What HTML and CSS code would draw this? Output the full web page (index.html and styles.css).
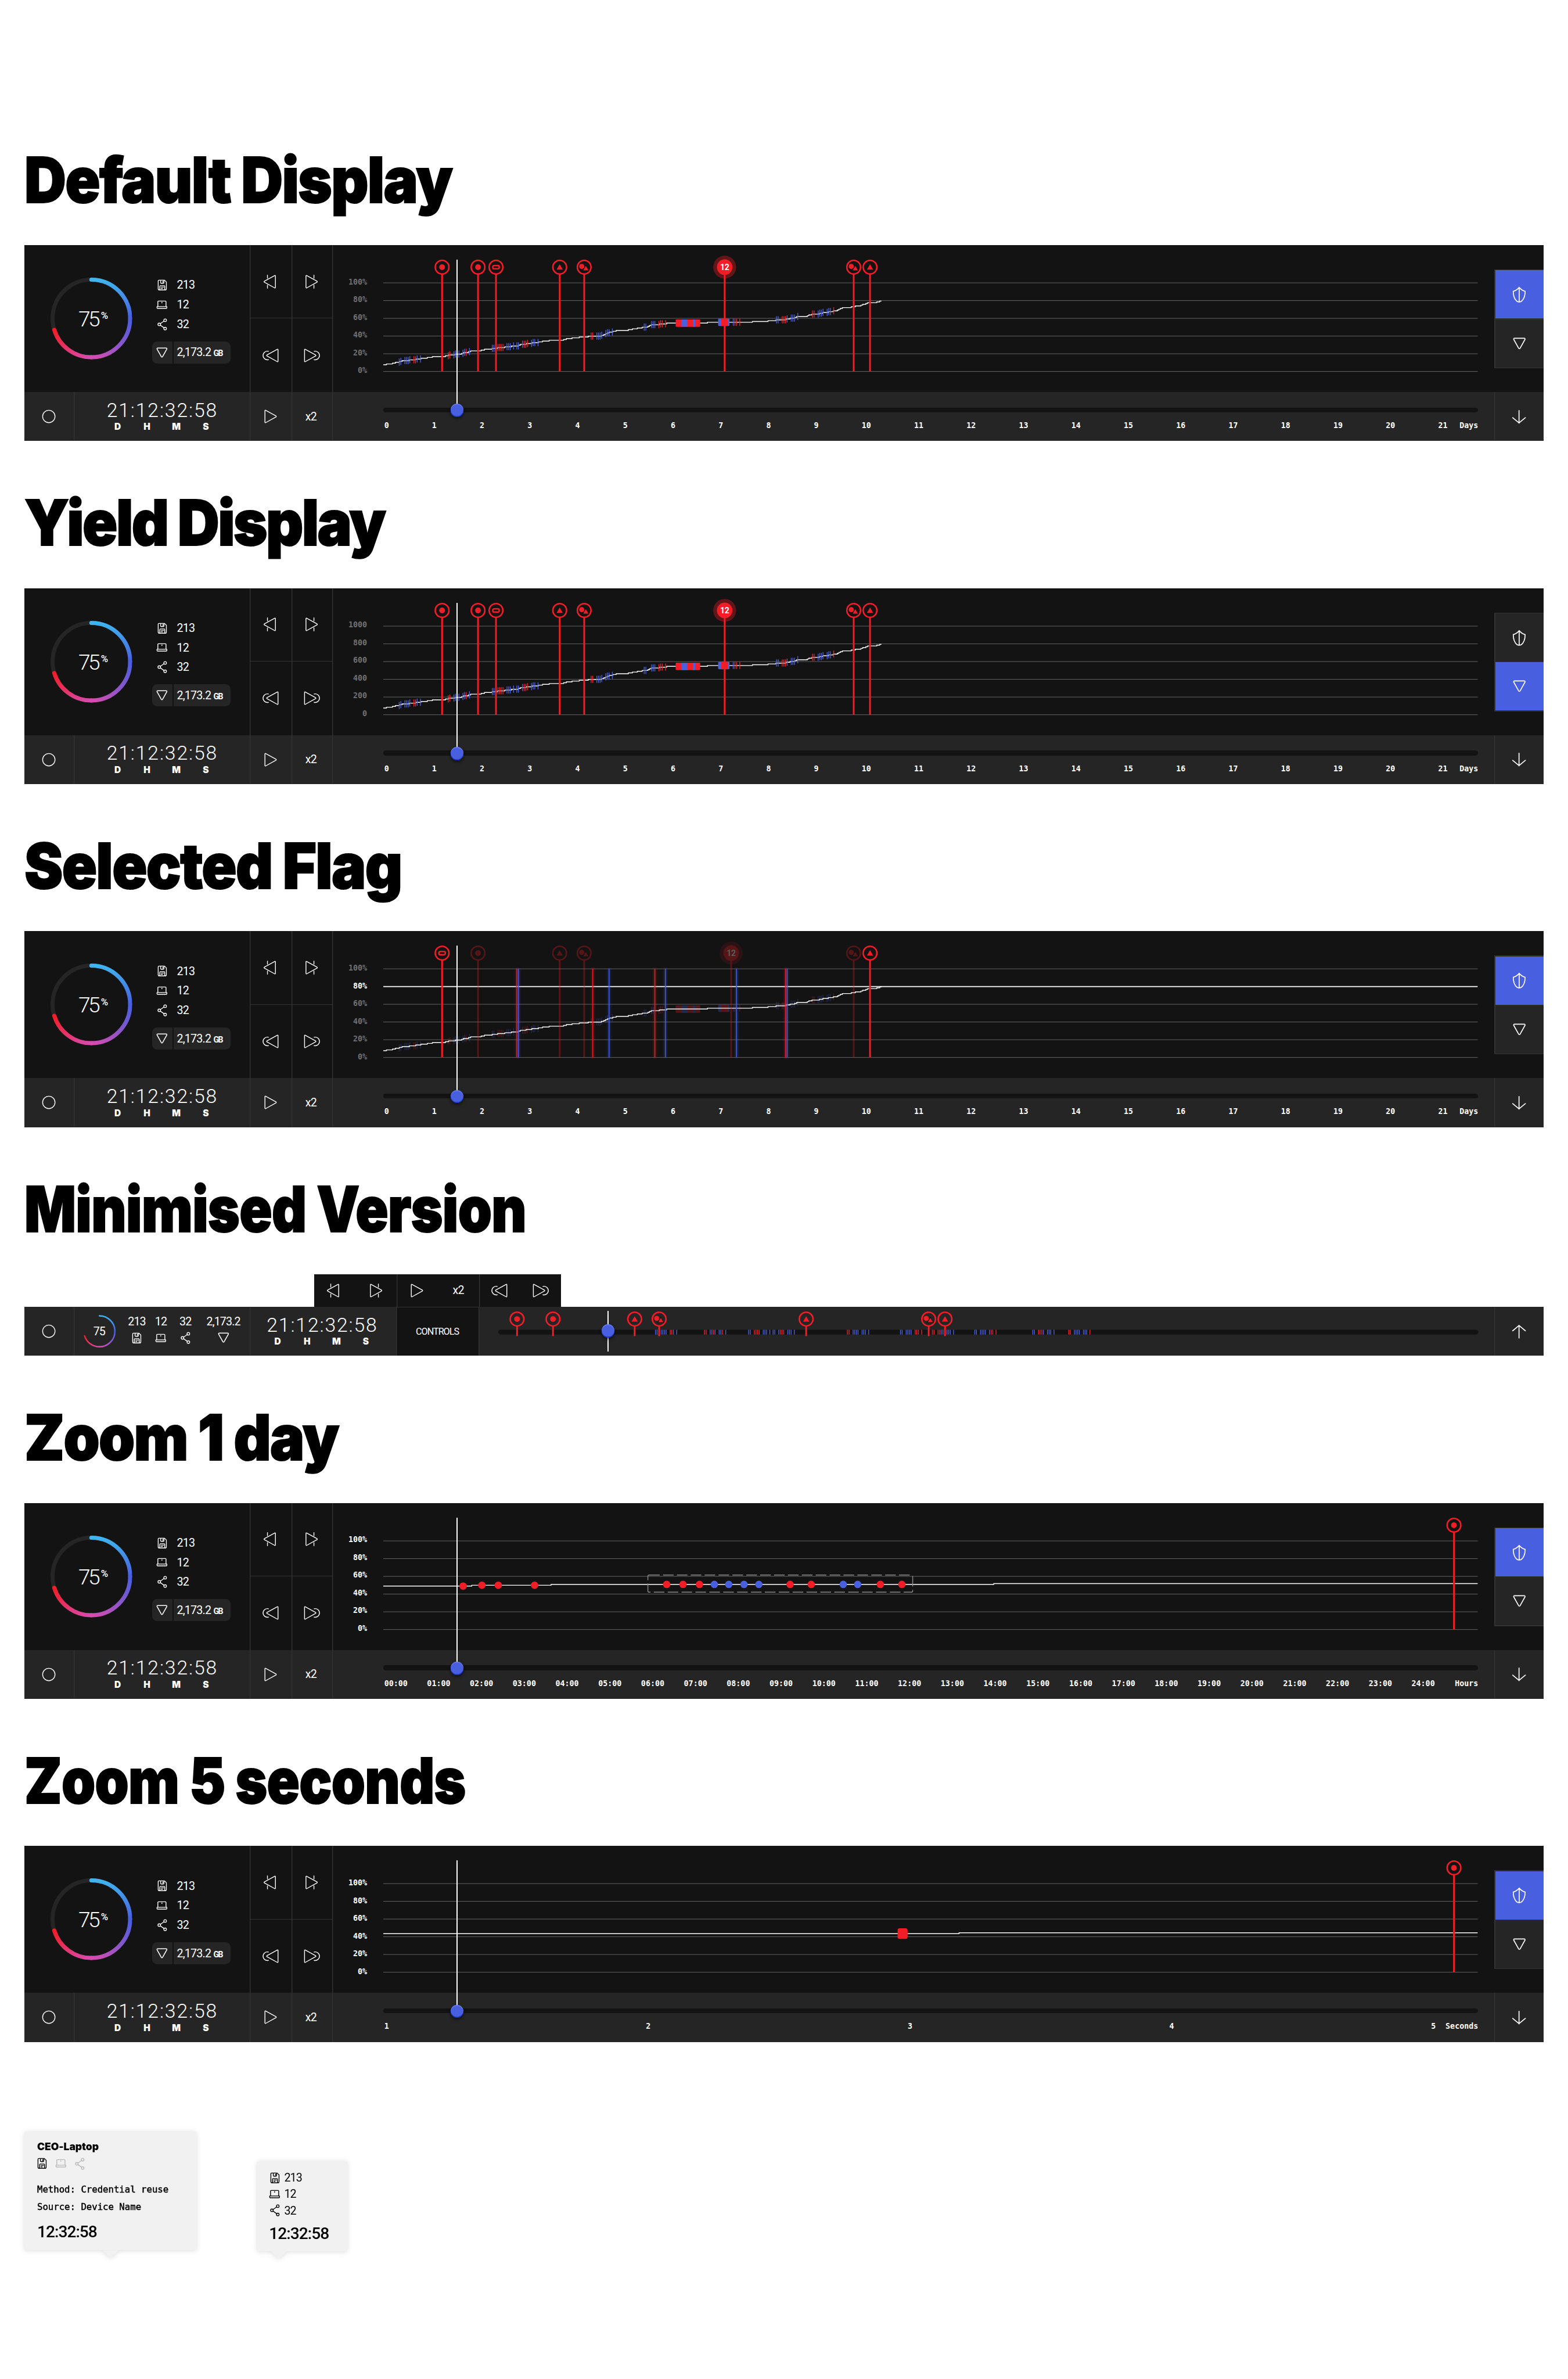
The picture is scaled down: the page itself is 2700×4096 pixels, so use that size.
FILE: index.html
```html
<!DOCTYPE html>
<html lang="en">
<head>
<meta charset="utf-8">
<title>Timeline states</title>
<link rel="stylesheet" href="styles.css">
</head>
<body>

<svg class="sprite" aria-hidden="true">
  <symbol id="i-record" viewBox="0 0 40 40"><circle cx="20" cy="20" r="15.2"/></symbol>
  <symbol id="i-play" viewBox="0 0 40 40"><path d="M6 5.8v28.4c0 1 .8 1.4 1.6 1L33 21.3c1-.6 1-2 0-2.6L7.600 4.800c-.8-.4-1.600 0-1.600 1z"/></symbol>
  <symbol id="i-prev" viewBox="0 0 40 40"><path d="M34.500 5.800v28.400c0 1-.8 1.400-1.600 1L7.500 21.300c-1-.6-1-2 0-2.600L32.900 4.800c.8-.4 1.600 0 1.600 1zM15 4v7.500M15 28.500V36"/></symbol>
  <symbol id="i-next" viewBox="0 0 40 40"><path d="M5.500 5.800v28.400c0 1 .8 1.400 1.600 1L32.500 21.300c1-.6 1-2 0-2.600L7.100 4.800c-.8-.4-1.600 0-1.600 1zM25 4v7.500M25 28.500V36"/></symbol>
  <symbol id="i-rewind" viewBox="0 0 40 40"><path d="M38 5.800v28.400c0 1-.8 1.400-1.600 1L11 21.300c-1-.6-1-2 0-2.600L36.400 4.800c.8-.4 1.600 0 1.600 1z"/><path d="M14.500 9.700A10.600 10.600 0 1 0 14.500 30.300"/></symbol>
  <symbol id="i-forward" viewBox="0 0 40 40"><path d="M2 5.800v28.400c0 1 .8 1.400 1.600 1L29 21.300c1-.6 1-2 0-2.600L3.600 4.800c-.8-.4-1.600 0-1.600 1z"/><path d="M25.500 9.700A10.600 10.600 0 1 1 25.500 30.300"/></symbol>
  <symbol id="i-disk" viewBox="0 0 24 28"><path d="M4 2h13.500L22 6.500V23a3 3 0 0 1-3 3H5a3 3 0 0 1-3-3V4a2 2 0 0 1 2-2zM8 2v6a1.500 1.500 0 0 0 1.500 1.500h5A1.500 1.500 0 0 0 16 8V2M13.500 4.500v2.500M6 26V17a1.500 1.500 0 0 1 1.500-1.500h9A1.500 1.500 0 0 1 18 17v9M9.500 19h6M9.500 22.500h3"/></symbol>
  <symbol id="i-laptop" viewBox="0 0 28 22"><path d="M4 15.500V3.500A1.500 1.500 0 0 1 5.500 2h17A1.500 1.500 0 0 1 24 3.500v12M2 15.500h24v3a1.500 1.500 0 0 1-1.500 1.500h-21A1.500 1.500 0 0 1 2 18.500zM14 4.500v2"/></symbol>
  <symbol id="i-share" viewBox="0 0 24 30"><circle cx="4.600" cy="15" r="3.200"/><circle cx="19" cy="4.800" r="3.200"/><circle cx="19" cy="25.200" r="3.200"/><path d="M7.200 13.100 16.300 6.700M7.200 16.900l9.100 6.400"/></symbol>
  <symbol id="i-yield" viewBox="0 0 32 30"><path d="M4 2h24a2 2 0 0 1 1.700 3L17.700 26.500a2 2 0 0 1-3.400 0L2.300 5A2 2 0 0 1 4 2z"/></symbol>
  <symbol id="i-shield" viewBox="0 0 34 40"><path d="M17 2.500c3.500 4.500 8.500 8 14.500 9.800C31.500 24 27 33 22 37c-3 1.500-7 1.500-10 0C7 33 2.500 24 2.500 12.300 8.500 10.500 13.500 7 17 2.500zM17 3v34.500"/></symbol>
  <symbol id="i-down" viewBox="0 0 36 36"><path d="M18 2.500v31M2.500 20 18 33 33.500 20"/></symbol>
  <symbol id="i-up" viewBox="0 0 36 36"><path d="M18 33.500v-31M2.500 16 18 3 33.500 16"/></symbol>

  <symbol id="f-dot" viewBox="-20 -20 40 40"><circle r="16.800"/><circle class="solid" r="7"/></symbol>
  <symbol id="f-slot" viewBox="-20 -20 40 40"><circle r="16.800"/><rect x="-7.800" y="-4" width="15.600" height="8" rx="3"/></symbol>
  <symbol id="f-tri" viewBox="-20 -20 40 40"><circle r="16.800"/><path class="solid" d="M0-7 7.200 5.200a.6.6 0 0 1-.6.9H-6.600a.6.6 0 0 1-.6-.9z"/></symbol>
  <symbol id="f-combo" viewBox="-20 -20 40 40"><circle r="16.800"/><circle class="solid" cx="-6" cy="-1.800" r="6.300"/><path class="solid cut" d="M4-4.500 11.600 8.600H-3.600z"/></symbol>

  <linearGradient id="g1" x1="0" y1="0" x2="0" y2="1"><stop stop-color="#3fb4f0"/><stop offset="1" stop-color="#485fe0"/></linearGradient>
  <linearGradient id="g2" x1="1" y1="0" x2="0" y2="1"><stop stop-color="#485fe0"/><stop offset="1" stop-color="#d84bb0"/></linearGradient>
  <linearGradient id="g3" x1="1" y1="1" x2="0" y2="0"><stop stop-color="#d84bb0"/><stop offset="1" stop-color="#f21d26"/></linearGradient>
  <symbol id="ring" viewBox="0 0 200 200">
    <circle class="ring-track" cx="100" cy="100" r="95"/>
    <path stroke="url(#g1)" d="M100 5A95 95 0 0 1 195 100"/>
    <path stroke="url(#g3)" d="M100 195A95 95 0 0 1 9.200 127.800"/>
    <path stroke="url(#g2)" d="M195 100A95 95 0 0 1 100 195"/>
  </symbol>
</svg>

<template id="panel">
  <div class="panel">
    <div class="info">
      <div class="gauge">
        <svg class="ring"><use href="#ring"/></svg>
        <div class="gauge-value">75<span class="pct">%</span></div>
      </div>
      <div class="stats">
        <div class="stat"><svg class="ico disk"><use href="#i-disk"/></svg><span>213</span></div>
        <div class="stat"><svg class="ico laptop"><use href="#i-laptop"/></svg><span>12</span></div>
        <div class="stat"><svg class="ico share"><use href="#i-share"/></svg><span>32</span></div>
        <div class="pill"><svg class="ico yield"><use href="#i-yield"/></svg><span>2,173.2 <b>GB</b></span></div>
      </div>
    </div>
    <div class="cell line-l line-b back"><svg class="ico step"><use href="#i-prev"/></svg></div>
    <div class="cell line-l line-b"><svg class="ico step"><use href="#i-next"/></svg></div>
    <div class="cell line-l"><svg class="ico step"><use href="#i-rewind"/></svg></div>
    <div class="cell line-l"><svg class="ico step"><use href="#i-forward"/></svg></div>
    <div class="graph line-l">
      <div class="levels"></div>
      <svg class="plot" viewBox="0 0 2680 360"></svg>
    </div>
    <div class="toggles">
      <div class="toggle"><svg class="ico shield"><use href="#i-shield"/></svg></div>
      <div class="toggle"><svg class="ico yield-lg"><use href="#i-yield"/></svg></div>
    </div>
    <div class="clock-cell bar">
      <div class="record"><svg class="ico step"><use href="#i-record"/></svg></div>
      <div class="clock line-l">
        <div class="time">21:12:32:58</div>
        <div class="units"><span>D</span><span>H</span><span>M</span><span>S</span></div>
      </div>
    </div>
    <div class="cell bar line-l"><svg class="ico step"><use href="#i-play"/></svg></div>
    <div class="cell bar line-l speed">x2</div>
    <div class="scrub bar line-l">
      <div class="track"></div>
      <div class="axis"><div class="ticks"></div><div class="unit"></div></div>
    </div>
    <div class="cell bar line-l"><svg class="ico arrow"><use href="#i-down"/></svg></div>
    <div class="playhead"><i class="knob"></i></div>
  </div>
</template>

<main>
  <section><h1>Default Display</h1><div data-panel="default"></div></section>
  <section><h1 class="snug">Yield Display</h1><div data-panel="yield"></div></section>
  <section><h1>Selected Flag</h1><div data-panel="selected"></div></section>

  <section>
    <h1 class="tight">Minimised Version</h1>
    <div class="popup">
      <div class="pair back"><svg class="ico step"><use href="#i-prev"/></svg><svg class="ico step"><use href="#i-next"/></svg></div>
      <div class="pair line-l"><svg class="ico step"><use href="#i-play"/></svg><span class="speed">x2</span></div>
      <div class="pair line-l"><svg class="ico step"><use href="#i-rewind"/></svg><svg class="ico step"><use href="#i-forward"/></svg></div>
    </div>
    <div class="mini">
      <div class="record"><svg class="ico step"><use href="#i-record"/></svg></div>
      <div class="mini-stats line-l">
        <div class="mini-gauge"><svg class="ring"><use href="#ring"/></svg><span>75</span></div>
        <div class="mini-stat w1"><span>213</span><svg class="ico disk"><use href="#i-disk"/></svg></div>
        <div class="mini-stat w2"><span>12</span><svg class="ico laptop"><use href="#i-laptop"/></svg></div>
        <div class="mini-stat w3"><span>32</span><svg class="ico share"><use href="#i-share"/></svg></div>
        <div class="mini-stat w4"><span>2,173.2</span><svg class="ico yield"><use href="#i-yield"/></svg></div>
      </div>
      <div class="clock line-l">
        <div class="time">21:12:32:58</div>
        <div class="units"><span>D</span><span>H</span><span>M</span><span>S</span></div>
      </div>
      <div class="controls line-l">CONTROLS</div>
      <div class="mini-scrub line-l"><svg class="mini-plot" viewBox="0 0 2400 120"></svg></div>
      <div class="cell line-l"><svg class="ico arrow"><use href="#i-up"/></svg></div>
      <div class="playhead"><i class="knob"></i></div>
    </div>
  </section>

  <section><h1>Zoom 1 day</h1><div data-panel="day"></div></section>
  <section><h1 class="tight">Zoom 5 seconds</h1><div data-panel="seconds"></div></section>

  <div class="tips">
    <div class="tip tip-device">
      <h2>CEO-Laptop</h2>
      <div class="tip-icons">
        <svg class="ico disk"><use href="#i-disk"/></svg>
        <svg class="ico laptop off"><use href="#i-laptop"/></svg>
        <svg class="ico share off"><use href="#i-share"/></svg>
      </div>
      <p>Method: Credential reuse</p>
      <p>Source: Device Name</p>
      <div class="tip-time">12:32:58</div>
    </div>
    <div class="tip tip-totals">
      <div class="tip-row"><svg class="ico disk"><use href="#i-disk"/></svg><span>213</span></div>
      <div class="tip-row"><svg class="ico laptop"><use href="#i-laptop"/></svg><span>12</span></div>
      <div class="tip-row"><svg class="ico share"><use href="#i-share"/></svg><span>32</span></div>
      <div class="tip-time">12:32:58</div>
    </div>
  </div>
</main>

<script src="script.js"></script>
</body>
</html>
```
FILE: styles.css
```css
/* 1rem = 10 design pixels */
html { font-size: 7.03125px; }
* { box-sizing: border-box; margin: 0; }

:root {
  --ink: #131313;
  --bar: #252525;
  --line: #333333;
  --red: #f21d26;
  --blue: #485fe0;
}

body {
  width: 384rem;
  height: 582.6rem;
  background: #fff;
  color: #fff;
  font-family: Roboto, sans-serif;
  overflow: hidden;
}

main { padding: 36rem 6rem 0; }
section { margin-bottom: 12rem; }

h1 {
  height: 24rem;
  padding-top: 0.1rem;
  color: #000;
  font: 900 15.4rem/15.8rem Inter, sans-serif;
  letter-spacing: -0.017em;
  white-space: nowrap;
  transform: scaleX(0.92);
  transform-origin: 0 0;
  -webkit-text-stroke: 0.3rem #000;
}
h1.snug { letter-spacing: -0.026em; }
h1.tight { letter-spacing: -0.007em; transform: scaleX(0.86); }

.sprite { position: absolute; width: 0; height: 0; }

/* icons */
.ico {
  display: block;
  flex: none;
  fill: none;
  stroke: currentColor;
  stroke-width: 2;
  stroke-linecap: round;
  stroke-linejoin: round;
  overflow: visible;
}
.step { width: 4rem; height: 4rem; }
.disk { width: 2.4rem; height: 2.8rem; }
.laptop { width: 2.8rem; height: 2.2rem; }
.share { width: 2.4rem; height: 3rem; }
.yield { width: 2.8rem; height: 2.6rem; stroke-width: 2.6; }
.yield-lg { width: 3.2rem; height: 3rem; stroke-width: 2.4; }
.shield { width: 3.4rem; height: 4rem; stroke-width: 2.4; }
.arrow { width: 3.6rem; height: 3.6rem; stroke-width: 2.4; }

/* full panel */
.panel {
  position: relative;
  display: grid;
  grid-template-columns: 55.2rem 10.2rem 10rem 1fr 12rem;
  grid-template-rows: 18rem 18rem 12rem;
  height: 48rem;
  background: var(--ink);
}
.line-l { box-shadow: inset 0.2rem 0 0 var(--line); }
.line-b { border-bottom: 0.2rem solid var(--line); }
.bar { background: var(--bar); }
.cell { display: flex; align-items: center; justify-content: center; }
.cell.back { padding-right: 0.5rem; }
.speed { font-size: 2.8rem; font-weight: 450; letter-spacing: -0.04em; }
.cell.speed { padding-right: 0.5rem; }

.info {
  grid-column: 1;
  grid-row: 1 / 3;
  display: flex;
  padding: 7.4rem 0 0 6.4rem;
}
.gauge { position: relative; width: 20rem; height: 20rem; margin-top: 0.6rem; }
.ring { display: block; width: 100%; height: 100%; fill: none; stroke-width: 10; stroke-linecap: round; overflow: visible; }
.ring-track { stroke: var(--bar); }
.gauge-value {
  position: absolute;
  left: 6.8rem;
  top: 6.8rem;
  font-size: 5.3rem;
  line-height: 6.6rem;
  font-weight: 300;
  letter-spacing: -0.1em;
  white-space: nowrap;
}
.pct { font-size: 2.4rem; font-weight: 500; margin-left: 0.7rem; vertical-align: 1.8rem; line-height: 1; }

.stats { margin-left: 4.8rem; }
.stat, .pill { display: grid; grid-template-columns: 5rem 1fr; align-items: center; }
.stat .ico, .pill .ico { justify-self: center; }
.stat { height: 4.8rem; }
.stat span, .pill span { padding-left: 1.1rem; font-size: 2.8rem; font-weight: 450; letter-spacing: -0.04em; white-space: nowrap; }
.pill {
  width: 19.2rem;
  height: 5.4rem;
  margin-top: 1.8rem;
  border-radius: 1.2rem;
  background: linear-gradient(90deg, var(--bar) 5rem, var(--ink) 5rem, var(--ink) 5.2rem, var(--bar) 5.2rem);
}
.pill b { font-size: 2rem; font-weight: 700; letter-spacing: -0.1em; }

.panel > .cell.line-l:nth-child(2) { grid-area: 1 / 2; }
.panel > .cell.line-l:nth-child(3) { grid-area: 1 / 3; }
.panel > .cell.line-l:nth-child(4) { grid-area: 2 / 2; }
.panel > .cell.line-l:nth-child(5) { grid-area: 2 / 3; }

.graph { grid-area: 1 / 4 / 3 / 5; display: flex; gap: 3.96rem; }
.levels {
  width: 8.5rem;
  margin-right: -0.06rem;
  padding-top: 6.95rem;
  color: #707070;
  font: 700 1.9rem/4.34rem "DejaVu Sans Mono", monospace;
  text-align: right;
}
.levels .lit { color: #fff; }
.plot { display: block; width: 268rem; height: 36rem; overflow: visible; }

.toggles {
  grid-area: 1 / 5 / 3 / 6;
  align-self: start;
  display: flex;
  flex-direction: column;
  gap: 0.2rem;
  margin-top: 6rem;
  padding: 0.2rem 0 0.2rem 0.2rem;
  background: var(--line);
}
.toggle { display: flex; align-items: center; justify-content: center; height: 11.8rem; background: var(--bar); }
.toggle.on { background: var(--blue); }

.clock-cell { display: flex; grid-row: 3; }
.record { display: flex; align-items: center; justify-content: center; width: 12rem; flex: none; }
.clock { flex: 1; display: flex; flex-direction: column; align-items: center; padding-top: 1.8rem; }
.time {
  font-size: 4.8rem;
  line-height: 5.4rem;
  font-weight: 300;
  letter-spacing: 0.055em;
  margin-right: -0.055em;
  white-space: nowrap;
}
.units { display: flex; margin-top: 0.1rem; font: 900 2.2rem/2.6rem Inter, sans-serif; }
.units span { width: 7.2rem; text-align: center; }

.scrub { padding: 3.8rem 4rem 0 12.4rem; }
.track { height: 1.2rem; border-radius: 0.6rem; background: var(--ink); }
.axis {
  display: flex;
  margin-top: 2.1rem;
  padding-left: 0.3rem;
  font: 700 1.9rem/2.4rem "DejaVu Sans Mono", monospace;
}
.ticks { flex: 1; display: flex; justify-content: space-between; }
.unit { margin-left: 2.9rem; }

.playhead {
  position: absolute;
  left: 105.8rem;
  top: 3.6rem;
  width: 0.2rem;
  height: 37rem;
  background: #fff;
}
.knob {
  position: absolute;
  left: -1.5rem;
  bottom: -1.5rem;
  width: 3.2rem;
  height: 3.2rem;
  border-radius: 50%;
  background: var(--blue);
  box-shadow: inset 0 0.2rem 0.1rem #6d80ec, inset 0 -0.2rem 0.1rem #1530c0, 0 0.4rem 0.8rem rgba(0, 0, 0, 0.6);
}

/* plot marks */
.grid-line { stroke: #6c6c6c; stroke-width: 1.3; }
.grid-line.lit { stroke: #fff; stroke-width: 2.4; }
.curve { fill: none; stroke: #fff; stroke-width: 2; }
.r { fill: var(--red); }
.b { fill: var(--blue); }
.dim { opacity: 0.3; }
.flag { color: var(--red); fill: none; stroke: var(--red); stroke-width: 3.6; }
.flag .stem { stroke-width: 4.2; stroke-linecap: round; }
.flag .halo { stroke: none; fill: var(--red); fill-opacity: 0.36; }
.flag .core { stroke: none; fill: var(--red); }
.flag text { stroke: none; fill: #fff; font: 700 20px Roboto, sans-serif; text-anchor: middle; letter-spacing: -0.5px; }
.solid { fill: var(--red); stroke: none; }
.cut { stroke: var(--ink); stroke-width: 1.6; }
.beam { filter: drop-shadow(0 0 3px currentColor); }
.beam.r { color: var(--red); }
.beam.b { color: var(--blue); }
.marquee { fill: none; stroke: #8c8c8c; stroke-width: 2; stroke-dasharray: 26 8; }

/* minimised bar */
.popup {
  display: flex;
  width: 60.4rem;
  height: 8rem;
  margin-left: 71rem;
  background: var(--ink);
}
.pair { display: flex; align-items: center; justify-content: space-around; width: 20.2rem; }
.pair.back .step:first-child { margin: 0 0.5rem 0 -0.5rem; }
.pair .speed { width: 4rem; text-align: center; }
.mini {
  position: relative;
  display: grid;
  grid-template-columns: 12rem 43.2rem 35.8rem 20.2rem 1fr 12rem;
  height: 12rem;
  background: var(--bar);
}
.mini-stats { display: flex; align-items: center; padding-left: 2.3rem; }
.mini-gauge { position: relative; width: 8rem; height: 8rem; display: flex; align-items: center; justify-content: center; }
.mini-gauge .ring { position: absolute; inset: 0; stroke-width: 9; }
.mini-gauge span { font-size: 2.8rem; font-weight: 450; letter-spacing: -0.05em; }
.mini-stat {
  display: flex;
  flex-direction: column;
  align-items: center;
  height: 7.6rem;
  font-size: 2.8rem;
  line-height: 3.2rem;
  font-weight: 450;
  letter-spacing: -0.045em;
}
.mini-stat .ico { margin: auto; }
.w1 { width: 6rem; margin-left: 2.2rem; }
.w2 { width: 5.8rem; }
.w3 { width: 6.2rem; }
.w4 { width: 12.4rem; }
.mini .clock { padding-right: 0.6rem; }
.controls {
  display: flex;
  align-items: center;
  justify-content: center;
  background: var(--ink);
  border-top: 0.2rem solid var(--line);
  font-size: 2.3rem;
  letter-spacing: -0.06em;
}
.mini-scrub { padding-left: 4.8rem; }
.mini-plot { display: block; width: 240rem; height: 12rem; overflow: visible; }
.mini .playhead { left: 142.8rem; top: 1rem; height: 10rem; }
.mini .knob { bottom: 3.5rem; }
.rail { fill: var(--ink); }

/* tooltips */
.tips { display: flex; align-items: flex-start; gap: 15rem; margin-top: 22rem; color: #000; }
.tip {
  position: relative;
  border-radius: 0.4rem;
  background: #f1f1f1;
  filter: drop-shadow(0 0.2rem 0.6rem rgba(0, 0, 0, 0.14));
}
.tip::after {
  content: "";
  position: absolute;
  top: 100%;
  width: 4rem;
  height: 1.9rem;
  background: inherit;
  clip-path: polygon(0 0, 100% 0, 50% 100%);
}
.tip-device { width: 42rem; height: 29rem; padding: 2.1rem 3.1rem; }
.tip-device::after { left: 19.1rem; }
.tip h2 { font: 900 2.5rem/3.2rem Inter, sans-serif; letter-spacing: -0.004em; }
.tip-icons { display: flex; align-items: center; gap: 2rem; height: 3rem; margin: 1rem 0 2.8rem; }
.tip-icons .off { color: #b9b9b9; }
.tip p { font: 400 2.23rem/4.2rem "DejaVu Sans Mono", monospace; -webkit-text-stroke: 0.07rem #000; }
.tip-time { font-size: 4rem; line-height: 4.8rem; letter-spacing: -0.035em; font-weight: 500; }
.tip-device .tip-time { margin-top: 1.7rem; }
.tip-totals { width: 22rem; height: 22rem; margin: 7.2rem 0 0; padding: 2.1rem 2.9rem; }
.tip-totals::after { left: 3.3rem; }
.tip-row { display: grid; grid-template-columns: 2.8rem 1fr; column-gap: 0.9rem; align-items: center; height: 4rem; }
.tip-row .ico { justify-self: center; }
.tip-row span { font-size: 2.8rem; letter-spacing: -0.045em; font-weight: 450; }
.tip-totals .tip-time { margin-top: 1.3rem; }
```
FILE: script.js
```js
// Event groups: start x, then one mark per offset ("." leaves a slot empty)
const OFFSETS = [0, 4, 14, 18, 22, 26, 36, 40, 44, 52];
const GROUPS = [
  [39, "BBBBBBRRBB"], [159, "RRBBRBBBRB"], [267, "BBRRRRBBBB"], [327, "BBBRRRBBBB"],
  [509, "RRBBBBBBBB"], [639, "BB.BBBRRRR"], [821, "......BRRR"], [963, "BBRRRBBBBB"],
  [1051, "RRBBBBBBBR"]
];
const MINI_GROUPS = [
  [385, "BBBBBBRRBB"], [505, "RRBBRBBBRB"], [613, "BBRRRRBBBB"], [673, "BBBRRRBBBB"],
  [855, "RRBBBBBBBB"], [985, "BBBBBBRRRR"], [1063, "RRRRBBBBBB"],
  [1167, "BBBBBBBRRR"], [1309, "BBRRRBBBBB"], [1397, "RRBBBBBBBR"]
];
// x positions at which the cumulative curve climbs by one step of 2
const CLIMBS = [7.8, 22.6, 29.8, 39.4, 46, 63.8, 79.5, 92, 107.8, 120.2, 152.2, 159.9, 176.6, 192, 196.3,
  208.7, 214, 239.8, 247.9, 266.6, 280, 297.7, 313.9, 331.1, 335.9, 349.8, 363.7, 379.9, 390, 406.2, 441.6,
  448.3, 462.2, 479.9, 501.9, 534.4, 540.2, 544.5, 548.8, 553.6, 562.2, 570.3, 600.1, 610.2, 622.2, 634.1,
  648, 651.8, 656.1, 676.2, 693.9, 793.9, 903.9, 942.2, 961.8, 986.2, 996.2, 1007.7, 1012.5, 1038.3, 1042.1,
  1049.8, 1068, 1076.6, 1090, 1101.9, 1112, 1115.8, 1119.6, 1124.4, 1146, 1156, 1169.8, 1174.1, 1181.8,
  1186.1, 1208.6, 1215.8];

const level = x => 293 - 2 * CLIMBS.filter(c => c <= x).length;
const steps = (start, climbs, end) =>
  climbs.reduce((d, x, i) => d + `H${x}V${start - 2 * (i + 1)}`, `M0 ${start}`) + `H${end}`;
const marks = groups => groups.flatMap(([x0, s]) =>
  [...s].map((c, i) => [x0 + OFFSETS[i], c.toLowerCase()]).filter(m => m[1] !== "."));
const rect = (c, x, y, w, h, rx = 0) => `<rect class="${c}" x="${x}" y="${y}" width="${w}" height="${h}" rx="${rx}"/>`;
const flag = (x, type, dim = "", y = 54, foot = 308) => `<g class="flag ${dim}">` + (type === "count"
  ? `<circle class="halo" cx="${x}" cy="${y}" r="28"/><circle class="core" cx="${x}" cy="${y}" r="19"/><path class="stem" d="M${x} ${y + 18}V${foot}"/><text x="${x}" y="${y + 7}">12</text>`
  : `<use href="#f-${type}" x="${x - 20}" y="${y - 20}" width="40" height="40"/><path class="stem" d="M${x} ${y + 19}V${foot}"/>`) + "</g>";
const gridLines = lit => [0, 1, 2, 3, 4, 5].map(i =>
  `<path class="grid-line ${i === lit ? "lit" : ""}" d="M0 ${92.5 + 43.4 * i}H2680"/>`).join("");
const blocks = [["r", 716, 182, 60, 2], ["b", 730, 182, 15], ["b", 758, 182, 6],
  ["b", 820, 180, 28, 2], ["r", 827.5, 180, 16]].map(([c, x, y, w, r]) => rect(c, x, y, w, 18, r)).join("");
const eventMarks = skip => marks(GROUPS).filter(m => !skip.includes(m[0]))
  .map(([x, c]) => rect(c, x - 1, level(x) - 9, 2, 17.5)).join("");
const curve = `<path class="curve" d="${steps(293, CLIMBS, 1220)}"/>`;
const FLAGS = [[144, "dot"], [232, "dot"], [276, "slot"], [432, "tri"], [492, "combo"], [836, "count"], [1152, "combo"], [1192, "tri"]];
const BEAMS = [["r", 327], ["b", 331], ["r", 513], ["b", 553], ["r", 665], ["b", 691], ["b", 865], ["r", 985], ["b", 989]];
const dots = (list, y) => list.map(([c, x]) => `<circle class="${c}" cx="${x}" cy="${y}" r="9"/>`).join("");

const percent = ["100%", "80%", "60%", "40%", "20%", "0%"];
const days = [...Array(22).keys()];
const overview = gridLines() + curve + eventMarks([]) + blocks + FLAGS.map(f => flag(...f)).join("");

const PANELS = {
  default: { levels: percent, ticks: days, unit: "Days", plot: overview },
  yield: { levels: [1000, 800, 600, 400, 200, 0], ticks: days, unit: "Days", plot: overview, toggle: 1 },
  selected: {
    levels: percent, lit: [1], ticks: days, unit: "Days",
    plot: `<g class="dim">${eventMarks(BEAMS.map(b => b[1]))}${blocks}</g>` + gridLines(1) + curve
      + BEAMS.map(([c, x]) => rect("beam " + c, x - 1, 92, 2, 218)).join("")
      + [[144, "slot"], [232, "dot", "dim"], [432, "tri", "dim"], [492, "combo", "dim"], [852, "count", "dim"],
        [1152, "combo", "dim"], [1192, "tri"]].map(f => flag(...f)).join("")
  },
  day: {
    levels: percent, lit: [0, 1, 2, 3, 4, 5], unit: "Hours", gap: 4.9,
    ticks: [...Array(25).keys()].map(h => String(h).padStart(2, "0") + ":00"),
    plot: gridLines() + `<path class="curve" d="${steps(203, [216.6, 410.8, 1495], 2680)}"/>`
      + dots([["r", 195.5]], 203) + dots([["r", 241.5], ["r", 281.5], ["r", 370.5]], 201)
      + dots([["r", 694], ["r", 734], ["r", 774.3], ["b", 810.7], ["b", 846], ["b", 883.4], ["b", 919.7], ["r", 996.2],
        ["r", 1048], ["b", 1126.4], ["b", 1161.8], ["r", 1217.2], ["r", 1270]], 199)
      + `<rect class="marquee" x="648" y="176" width="648.5" height="42" rx="3"/>` + flag(2622, "dot")
  },
  seconds: {
    levels: percent, lit: [0, 1, 2, 3, 4, 5], unit: "Seconds", gap: 2.4, ticks: [1, 2, 3, 4, 5],
    plot: gridLines() + `<path class="curve" d="${steps(215, [1410], 2680)}"/>` + rect("r", 1259.5, 202, 24.5, 26, 5) + flag(2622, "dot")
  }
};

const template = document.getElementById("panel");
for (const host of document.querySelectorAll("[data-panel]")) {
  const p = PANELS[host.dataset.panel];
  const node = template.content.cloneNode(true);
  node.querySelector(".levels").innerHTML = p.levels
    .map((t, i) => `<div class="${p.lit && p.lit.includes(i) ? "lit" : ""}">${t}</div>`).join("");
  node.querySelector(".ticks").innerHTML = p.ticks.map(t => `<span>${t}</span>`).join("");
  node.querySelector(".unit").textContent = p.unit;
  if (p.gap) node.querySelector(".unit").style.marginLeft = p.gap + "rem";
  node.querySelectorAll(".toggle")[p.toggle || 0].classList.add("on");
  node.querySelector(".plot").innerHTML = p.plot;
  host.append(node);
}

document.querySelector(".mini-plot").innerHTML = rect("rail", 0, 56, 2400, 12, 6)
  + marks(MINI_GROUPS).map(([x, c]) => rect(c, x - 1, 56, 2, 12)).join("")
  + [[46, "dot"], [134, "dot"], [334, "tri"], [394, "combo"], [754, "tri"], [1054, "combo"], [1094, "tri"]]
    .map(([x, t]) => flag(x, t, "", 30, 70)).join("");
```
